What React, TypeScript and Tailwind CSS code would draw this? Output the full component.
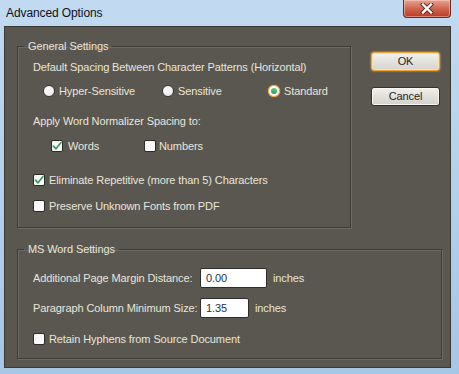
import React from "react";

const font = { fontFamily: '"Liberation Sans", Arial, sans-serif', letterSpacing: "-0.1px" };

function Radio({ checked }: { checked?: boolean }) {
  if (checked) {
    return (
      <span className="w-[12px] h-[12px] rounded-full bg-[#f4a640] flex items-center justify-center shrink-0 shadow-[0_0_1px_#ffcf80]">
        <span className="w-[10px] h-[10px] rounded-full bg-white flex items-center justify-center">
          <span className="w-[6px] h-[6px] rounded-full bg-gradient-to-b from-[#5fd08a] to-[#1e9c4e]" />
        </span>
      </span>
    );
  }
  return (
    <span className="w-[12px] h-[12px] rounded-full bg-gradient-to-br from-[#ffffff] to-[#e8e8e8] border border-[#3a3834] shrink-0" />
  );
}

function Check({ checked }: { checked?: boolean }) {
  return (
    <span className="w-[12px] h-[12px] rounded-[2px] bg-gradient-to-br from-[#f4f4f4] to-[#ffffff] border border-[#2e2c29] shrink-0 flex items-center justify-center">
      {checked && (
        <svg width="10" height="10" viewBox="0 0 10 10">
          <path d="M1.5 5.2 L4 7.8 L8.8 1.8" fill="none" stroke="#3f9a5a" strokeWidth="1.8" strokeLinecap="round" strokeLinejoin="round" />
        </svg>
      )}
    </span>
  );
}

export default function App() {
  return (
    <div
      className="w-[459px] h-[374px] bg-gradient-to-b from-[#c2daf1] via-[#b3d0ec] to-[#a6c6e6] relative overflow-hidden text-[11px]"
      style={font}
    >
      {/* title bar */}
      <div className="h-[26px] flex items-center pl-[6px] text-[12px] text-[#111]" style={{ fontFamily: '"Liberation Sans", "Noto Sans", sans-serif' }}>
        Advanced Options
      </div>
      {/* close button */}
      <div className="absolute left-[403px] top-0 w-[48px] h-[18px] rounded-b-[4px] border border-t-0 border-[#6b2a1f] bg-gradient-to-b from-[#e7a292] via-[#d06650] to-[#b93a26] flex items-center justify-center shadow-[inset_0_0_0_1px_rgba(255,220,210,0.45)]">
        <svg width="14" height="11" viewBox="0 0 14 11">
          <path d="M3 1.5 L11 9.5 M11 1.5 L3 9.5" stroke="#5a2a22" strokeWidth="4.2" strokeLinecap="square" />
          <path d="M3 1.5 L11 9.5 M11 1.5 L3 9.5" stroke="#ffffff" strokeWidth="2.4" strokeLinecap="square" />
        </svg>
      </div>

      {/* content panel */}
      <div className="ml-[4px] w-[447px] h-[342px] bg-[#5a5751] border border-[#3b3934] text-[#e8e6da] pl-[12px] pt-[12px]">
        <div className="flex">
          <fieldset className="w-[334px] h-[189px] border border-[#3e3c37] shadow-[inset_1px_1px_0_#6c6a63,1px_1px_0_#6c6a63] p-0 m-0">
            <legend className="ml-[6px] px-[4px] h-[14px] leading-[14px]">General Settings</legend>
            <div className="pl-[15px]">
              <div className="h-[14px] leading-[14px] mt-[7px]">Default Spacing Between Character Patterns (Horizontal)</div>
              <div className="h-[14px] mt-[10px] flex items-center relative">
                <div className="absolute left-[10px] flex items-center gap-[4px] leading-[14px]"><Radio />Hyper-Sensitive</div>
                <div className="absolute left-[129px] flex items-center gap-[4px] leading-[14px]"><Radio />Sensitive</div>
                <div className="absolute left-[235px] flex items-center gap-[4px] leading-[14px]"><Radio checked />Standard</div>
              </div>
              <div className="h-[14px] leading-[14px] mt-[16px]">Apply Word Normalizer Spacing to:</div>
              <div className="h-[14px] mt-[11px] relative">
                <div className="absolute left-[18px] flex items-center gap-[5px] leading-[14px]"><Check checked />Words</div>
                <div className="absolute left-[111px] flex items-center gap-[3px] leading-[14px]"><Check />Numbers</div>
              </div>
              <div className="h-[14px] mt-[20px] flex items-center gap-[4px] leading-[14px]"><Check checked />Eliminate Repetitive (more than 5) Characters</div>
              <div className="h-[14px] mt-[12px] flex items-center gap-[4px] leading-[14px]"><Check />Preserve Unknown Fonts from PDF</div>
            </div>
          </fieldset>
          <div className="ml-[20px] pt-[13px] flex flex-col gap-[16px]">
            <button className="w-[69px] h-[19px] rounded-[3px] border border-[#f0a437] bg-gradient-to-b from-[#f3f2ef] to-[#d6d4ce] text-[#1e1e1e] text-[11px] leading-[17px] shadow-[0_0_2px_#f6c46a,inset_0_0_0_1px_#fbe0a8]">OK</button>
            <button className="w-[69px] h-[19px] rounded-[3px] border border-[#34322e] bg-gradient-to-b from-[#f0efeb] to-[#d3d1cb] text-[#1e1e1e] text-[11px] leading-[17px] shadow-[inset_0_0_0_1px_#f7f6f2]">Cancel</button>
          </div>
        </div>

        <fieldset className="mt-[14px] w-[425px] h-[117px] border border-[#3e3c37] shadow-[inset_1px_1px_0_#6c6a63,1px_1px_0_#6c6a63] p-0 m-0">
          <legend className="ml-[6px] px-[4px] h-[14px] leading-[14px]">MS Word Settings</legend>
          <div className="pl-[15px]">
            <div className="mt-[12px] flex items-center h-[20px]">
              <span className="w-[167px] shrink-0 whitespace-nowrap leading-[14px]">Additional Page Margin Distance:</span>
              <span className="w-[67px] h-[20px] bg-white border border-[#2f2d2a] rounded-[2px] text-[#23304f] pl-[5px] leading-[18px]">0.00</span>
              <span className="ml-[6px]">inches</span>
            </div>
            <div className="mt-[10px] flex items-center h-[20px]">
              <span className="w-[167px] shrink-0 whitespace-nowrap leading-[14px]">Paragraph Column Minimum Size:</span>
              <span className="w-[49px] h-[20px] bg-white border border-[#2f2d2a] rounded-[2px] text-[#23304f] pl-[5px] leading-[18px]">1.35</span>
              <span className="ml-[6px]">inches</span>
            </div>
            <div className="h-[14px] mt-[14px] flex items-center gap-[4px] leading-[14px]"><Check />Retain Hyphens from Source Document</div>
          </div>
        </fieldset>
      </div>
    </div>
  );
}
